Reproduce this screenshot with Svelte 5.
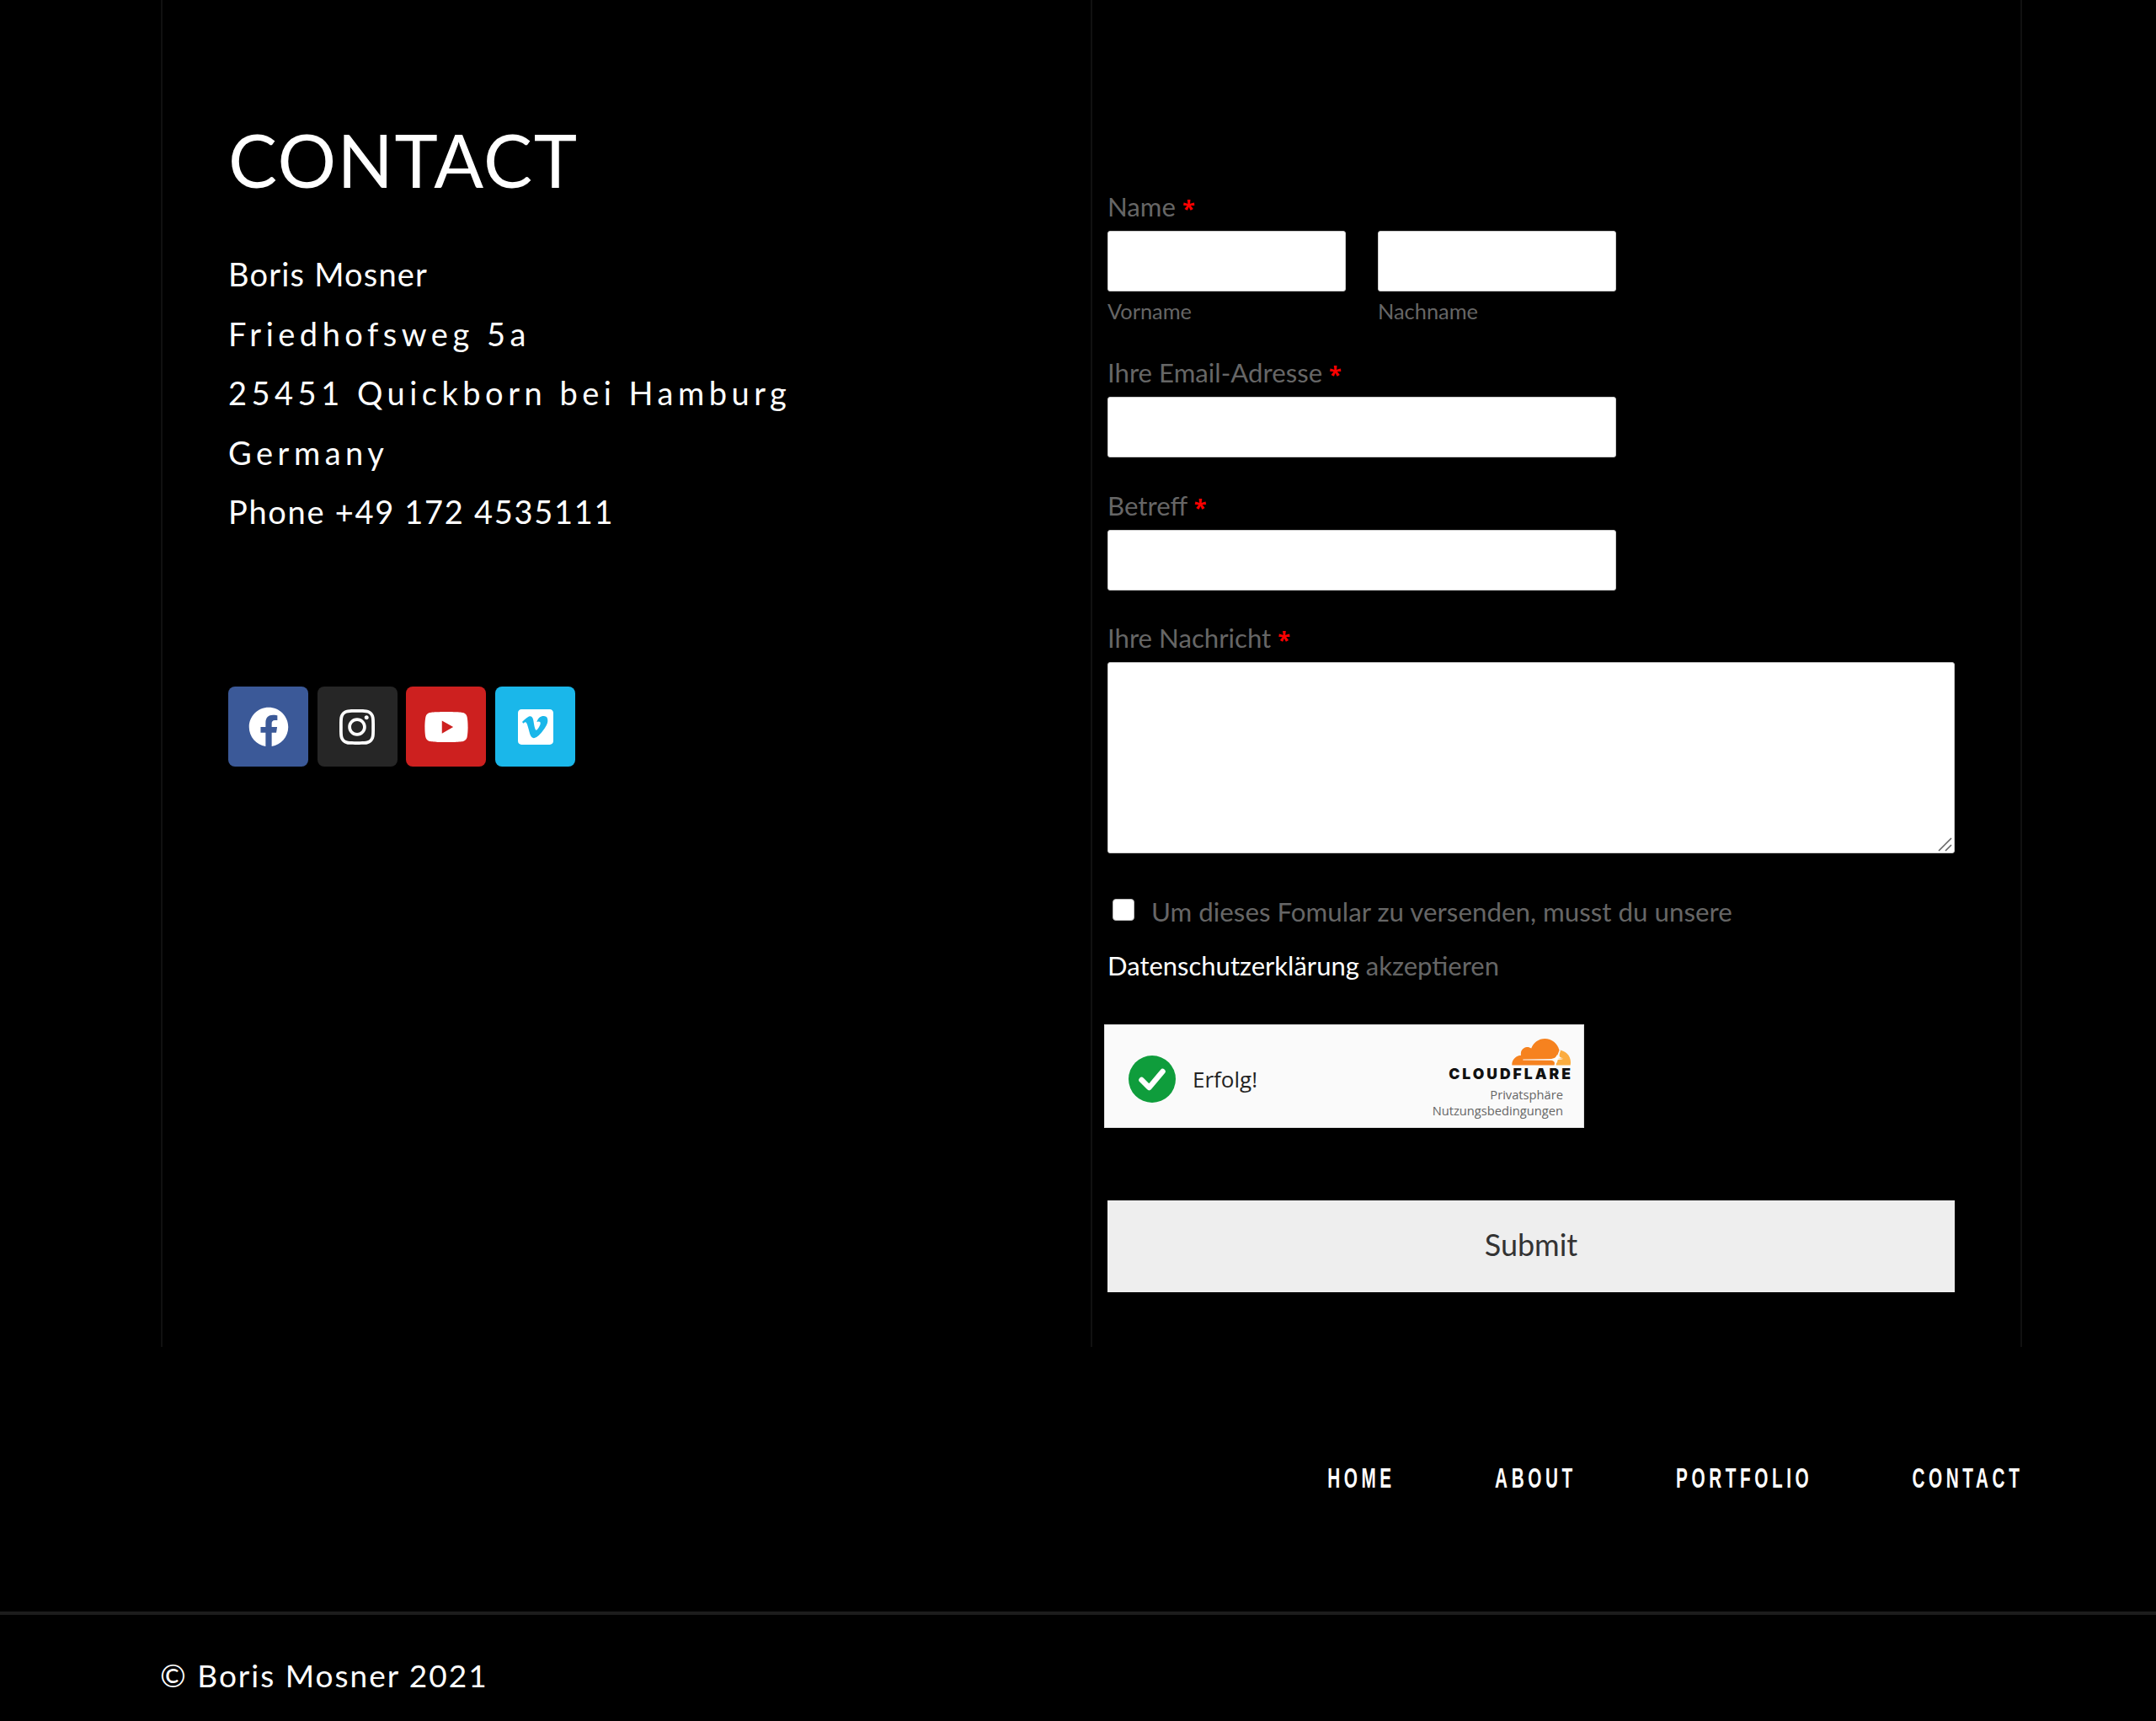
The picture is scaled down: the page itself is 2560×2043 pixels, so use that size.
<script lang="ts">
const address = [
  { text: 'Boris Mosner', tracking: 'tight' },
  { text: 'Friedhofsweg 5a', tracking: 'wide' },
  { text: '25451 Quickborn bei Hamburg', tracking: 'wide' },
  { text: 'Germany', tracking: 'wide' },
  { text: 'Phone +49 172 4535111', tracking: 'normal' },
];
const navItems = ['Home', 'About', 'Portfolio', 'Contact'];
</script>

<div class="page">
  <section class="contact">
    <div class="contact__col contact__col--info">
      <h1 class="contact__title">CONTACT</h1>
      <div class="contact__address">
        {#each address as line}
          <p class="contact__line contact__line--{line.tracking}">{line.text}</p>
        {/each}
      </div>
      <div class="social">
        <a class="social__btn social__btn--fb" href="#fb" aria-label="Facebook">
          <svg viewBox="0 0 512 512" fill="#fff"><path d="M504 256C504 119 393 8 256 8S8 119 8 256c0 123.78 90.69 226.38 209.25 245V327.69h-63V256h63v-54.64c0-62.15 37-96.48 93.67-96.48 27.14 0 55.52 4.84 55.52 4.84v61h-31.28c-30.8 0-40.41 19.12-40.41 38.73V256h68.78l-11 71.69h-57.78V501C413.31 482.38 504 379.78 504 256z" /></svg>
        </a>
        <a class="social__btn social__btn--ig" href="#ig" aria-label="Instagram">
          <svg viewBox="0 0 448 512" fill="#fff"><path d="M224.1 141c-63.6 0-114.9 51.3-114.9 114.9s51.3 114.9 114.9 114.9S339 319.5 339 255.9 287.7 141 224.1 141zm0 189.6c-41.1 0-74.7-33.5-74.7-74.7s33.5-74.7 74.7-74.7 74.7 33.5 74.7 74.7-33.6 74.7-74.7 74.7zm146.4-194.3c0 14.9-12 26.8-26.8 26.8-14.9 0-26.8-12-26.8-26.8s12-26.8 26.8-26.8 26.8 12 26.8 26.8zm76.1 27.2c-1.7-35.9-9.9-67.7-36.2-93.9-26.2-26.2-58-34.4-93.9-36.2-37-2.1-147.9-2.1-184.9 0-35.8 1.7-67.6 9.9-93.9 36.1s-34.4 58-36.2 93.9c-2.1 37-2.1 147.9 0 184.9 1.7 35.9 9.9 67.7 36.2 93.9s58 34.4 93.9 36.2c37 2.1 147.9 2.1 184.9 0 35.9-1.7 67.7-9.9 93.9-36.2 26.2-26.2 34.4-58 36.2-93.9 2.1-37 2.1-147.8 0-184.8zM398.8 388c-7.8 19.6-22.9 34.7-42.6 42.6-29.5 11.7-99.5 9-132.1 9s-102.7 2.6-132.1-9c-19.6-7.8-34.7-22.9-42.6-42.6-11.7-29.5-9-99.5-9-132.1s-2.6-102.7 9-132.1c7.8-19.6 22.9-34.7 42.6-42.6 29.5-11.7 99.5-9 132.1-9s102.7-2.6 132.1 9c19.6 7.8 34.7 22.9 42.6 42.6 11.7 29.5 9 99.5 9 132.1s2.7 102.7-9 132.1z" /></svg>
        </a>
        <a class="social__btn social__btn--yt" href="#yt" aria-label="Youtube">
          <svg viewBox="0 0 576 512" fill="#fff"><path d="M549.655 124.083c-6.281-23.65-24.787-42.276-48.284-48.597C458.781 64 288 64 288 64S117.22 64 74.629 75.486c-23.497 6.322-42.003 24.947-48.284 48.597-11.412 42.867-11.412 132.305-11.412 132.305s0 89.438 11.412 132.305c6.281 23.65 24.787 41.5 48.284 47.821C117.22 448 288 448 288 448s170.78 0 213.371-11.486c23.497-6.321 42.003-24.171 48.284-47.821 11.412-42.867 11.412-132.305 11.412-132.305s0-89.438-11.412-132.305zm-317.51 213.508V175.185l142.739 81.205-142.739 81.201z" /></svg>
        </a>
        <a class="social__btn social__btn--vm" href="#vm" aria-label="Vimeo">
          <svg viewBox="0 0 448 512" fill="#fff"><path d="M403.2 32H44.8C20.1 32 0 52.1 0 76.8v358.4C0 459.9 20.1 480 44.8 480h358.4c24.7 0 44.8-20.1 44.8-44.8V76.8c0-24.7-20.1-44.8-44.8-44.8zM377 180.8c-1.4 31.5-23.4 74.7-66 129.4-44 57.2-81.3 85.8-111.7 85.8-18.9 0-34.8-17.4-47.9-52.3-25.5-93.3-36.4-148-57.4-148-2.4 0-10.9 5.1-25.4 15.2l-15.2-19.6c37.3-32.8 72.9-69.2 95.2-71.2 25.2-2.4 40.7 14.8 46.5 51.7 20.7 131.2 29.9 151 67.6 91.6 13.5-21.4 20.8-37.7 21.8-48.9 3.5-33.2-25.9-30.9-45.8-22.4 15.9-52.1 46.3-77.4 91.2-76 33.3.9 49 22.5 47.1 64.7z" /></svg>
        </a>
      </div>
    </div>

    <form class="contact__col contact__col--form" onsubmit={(e) => e.preventDefault()}>
      <div class="field field--name">
        <span class="field__label">Name <em>*</em></span>
        <div class="field__pair">
          <label><input type="text" /><small>Vorname</small></label>
          <label><input type="text" /><small>Nachname</small></label>
        </div>
      </div>
      <label class="field field--half">
        <span class="field__label">Ihre Email-Adresse <em>*</em></span>
        <input type="email" />
      </label>
      <label class="field field--half">
        <span class="field__label">Betreff <em>*</em></span>
        <input type="text" />
      </label>
      <label class="field">
        <span class="field__label">Ihre Nachricht <em>*</em></span>
        <span class="field__message">
          <textarea></textarea>
          <svg class="field__grip" viewBox="0 0 18 18" stroke="#666" stroke-width="1.6" fill="none">
            <path d="M1 17L16 2M9 17l7-7" />
          </svg>
        </span>
      </label>

      <div class="consent">
        <label class="consent__row"><input type="checkbox" /> <span>Um dieses Fomular zu versenden, musst du unsere</span></label>
        <p><a href="#privacy">Datenschutzerklärung</a> akzeptieren</p>
      </div>

      <div class="turnstile">
        <svg class="turnstile__check" viewBox="0 0 56 56">
          <circle cx="28" cy="28" r="28" fill="#0f9d3c" />
          <path d="M15.5 29l9 9 16-19" fill="none" stroke="#fff" stroke-width="6.5" stroke-linecap="round" stroke-linejoin="round" />
        </svg>
        <span class="turnstile__status">Erfolg!</span>
        <div class="turnstile__brand">
          <svg class="turnstile__cloud" viewBox="0 0 70 32">
            <path fill="#f6821f" d="M50.5 31.5c.7-2 .5-3.6-.6-4.5-1-.8-2.300-1.100-3.900-1.200L13.500 25.400c-.4 0-.5-.5-.1-.7.300-.1.600-.2.900-.2L47 24c3.300-.1 6.700-2.800 7.900-6l1.500-4c.1-.2.100-.400 0-.600C54.300 5.700 47.500 0 39.400 0 31.900 0 25.500 4.800 23.200 11.600c-1.500-1.100-3.400-1.700-5.400-1.500-3.600.4-6.500 3.300-6.900 6.900-.1 1-.1 1.800.2 2.700C5.100 20 .3 24.800.3 30.700c0 .3.100.7.100.8h50.100z" />
            <path fill="#fbad41" d="M59.300 13.500h-.8c-.2 0-.3.100-.4.300l-1.100 3.700c-.7 2-.5 3.600.6 4.500 1 .8 2.300 1.100 3.900 1.200l-6.700.4c-.3 0-.6.200-.8.500-.5 1.600-.9 3.500-1.400 7.400h16.800c.1 0 .2-.1.300-.2.200-1.100.3-2.200.3-3.400 0-7.900-6.500-14.400-14.700-14.400z" />
            <path fill="#fff" d="M53.500 19l1.200 4.300 6.300.9-6.300.9-1.200 4.300-1.200-4.300-6.300-.9 6.300-.9z" />
          </svg>
          <span class="turnstile__logo">CLOUDFLARE</span>
          <span class="turnstile__link">Privatsphäre</span>
          <span class="turnstile__link">Nutzungsbedingungen</span>
        </div>
      </div>

      <button class="submit" type="submit">Submit</button>
    </form>
  </section>

  <nav class="footer-nav">
    <div class="footer-nav__list">
      {#each navItems as item}
        <a href="#{item.toLowerCase()}">{item}</a>
      {/each}
    </div>
  </nav>

  <footer class="copyright">© Boris Mosner 2021</footer>
</div>

<style>
  :global(body) {
    background: #000;
    margin: 0;
  }

  .page {
    background: #000;
    color: #fff;
    font-family: Lato, 'Open Sans', sans-serif;
    height: 2043px;
    overflow: hidden;
  }

  .contact {
    border-right: 2px solid #111;
    box-sizing: border-box;
    display: grid;
    grid-template-columns: 1104px 1104px;
    height: 1599px;
    margin-left: 191px;
    width: 2210px;
  }

  .contact__col {
    border-left: 2px solid #111;
    box-sizing: border-box;
  }

  .contact__col--info {
    padding: 134.5px 0 0 78px;
  }

  .contact__title {
    font-size: 87px;
    font-weight: 400;
    letter-spacing: 1.5px;
    line-height: 110px;
    margin: 0 0 45.5px;
  }

  .contact__line {
    font-size: 38px;
    line-height: 70.5px;
    margin: 0;
  }

  .contact__line--tight {
    letter-spacing: 1.2px;
  }

  .contact__line--normal {
    letter-spacing: 1.7px;
  }

  .contact__line--wide {
    letter-spacing: 5.5px;
  }

  .social {
    display: flex;
    gap: 10.7px;
    margin-top: 172.5px;
  }

  .social__btn {
    align-items: center;
    border-radius: 8px;
    display: flex;
    height: 95px;
    justify-content: center;
    width: 95px;
  }

  .social__btn svg {
    height: 48px;
  }

  .social__btn--fb { background: #3b5998; }
  .social__btn--ig { background: #262626; }
  .social__btn--yt { background: #cd201f; }
  .social__btn--vm { background: #1ab7ea; }

  .contact__col--form {
    box-sizing: content-box;
    color: #666;
    display: flex;
    flex-direction: column;
    padding: 225px 0 0 18px;
    width: 1006px;
  }

  .field {
    display: block;
    margin-bottom: 36.5px;
  }

  .field--name {
    margin-bottom: 38px;
  }

  .field--half {
    width: 604px;
  }

  .field__label {
    display: block;
    font-size: 31.2px;
    line-height: 40px;
    margin-bottom: 9px;
  }

  .field__label em {
    color: #f00;
    font-family: 'Open Sans', sans-serif;
    font-size: 27px;
    font-style: normal;
    font-weight: 700;
    line-height: 0;
  }

  .field__pair {
    display: grid;
    gap: 38px;
    grid-template-columns: 283px 283px;
  }

  .field small {
    display: block;
    font-size: 25.4px;
    line-height: 30px;
    margin-top: 8px;
  }

  input[type='text'],
  input[type='email'],
  textarea {
    background: #fff;
    border: 1px solid #ccc;
    border-radius: 3px;
    box-sizing: border-box;
    display: block;
    height: 72px;
    width: 100%;
  }

  textarea {
    height: 227px;
    resize: none;
  }

  .field__message {
    display: block;
    position: relative;
  }

  .field__grip {
    bottom: 2px;
    height: 18px;
    pointer-events: none;
    position: absolute;
    right: 2px;
    width: 18px;
  }

  .consent {
    font-size: 31.3px;
    line-height: 64px;
  }

  .consent p {
    font-size: 31px;
    margin: 0;
  }

  .consent a {
    color: #fff;
    text-decoration: none;
  }

  .consent__row {
    align-items: center;
    display: flex;
    gap: 20px;
  }

  .consent__row input {
    appearance: none;
    background: #fff;
    border: 1px solid #bbb;
    border-radius: 4px;
    box-sizing: border-box;
    flex: none;
    height: 26px;
    margin: 0 0 4px 6px;
    width: 26px;
  }

  .turnstile {
    align-items: center;
    background: #fafafa;
    border: 1px solid #e0e0e0;
    box-sizing: border-box;
    color: #232323;
    display: flex;
    height: 123px;
    margin: 38px 0 0 -4px;
    padding: 0 15px 0 28px;
    width: 570px;
  }

  .turnstile__check {
    flex: none;
    height: 56px;
    margin-top: 8px;
    width: 56px;
  }

  .turnstile__status {
    flex: 1;
    font-family: 'Open Sans', sans-serif;
    font-size: 26px;
    margin: 8px 0 0 20px;
  }

  .turnstile__brand {
    align-items: flex-end;
    display: flex;
    flex-direction: column;
    margin-top: 7px;
  }

  .turnstile__cloud {
    height: 32px;
    width: 70px;
  }

  .turnstile__logo {
    color: #111;
    font-family: Inter, sans-serif;
    font-size: 17.5px;
    font-weight: 900;
    letter-spacing: 3px;
    line-height: 18px;
    margin: 1px -3px 6px 0;
  }

  .turnstile__link {
    color: #666;
    font-family: 'Open Sans', sans-serif;
    font-size: 14.7px;
    line-height: 19px;
    margin-right: 9px;
  }

  .submit {
    background: #eee;
    border: none;
    color: #333;
    font-family: inherit;
    font-size: 36px;
    height: 109px;
    margin-top: 86px;
    padding: 0 0 4px;
    width: 100%;
  }

  .footer-nav {
    align-items: center;
    box-sizing: border-box;
    display: flex;
    height: 314px;
    justify-content: flex-end;
    padding: 0 158px 3px 0;
  }

  /* no Bebas here, so squeeze the caps sideways */
  .footer-nav__list {
    display: flex;
    flex: none;
    gap: 194px;
    transform: scaleX(0.61);
    transform-origin: right center;
  }

  .footer-nav a {
    color: #fff;
    font-family: 'Liberation Sans', sans-serif;
    font-size: 34px;
    font-weight: 700;
    letter-spacing: 7.5px;
    text-decoration: none;
    text-transform: uppercase;
  }

  .copyright {
    border-top: 4px solid #1c1c1c;
    box-sizing: border-box;
    font-size: 37px;
    letter-spacing: 2px;
    line-height: 50px;
    padding: 47px 0 0 190px;
  }
</style>
